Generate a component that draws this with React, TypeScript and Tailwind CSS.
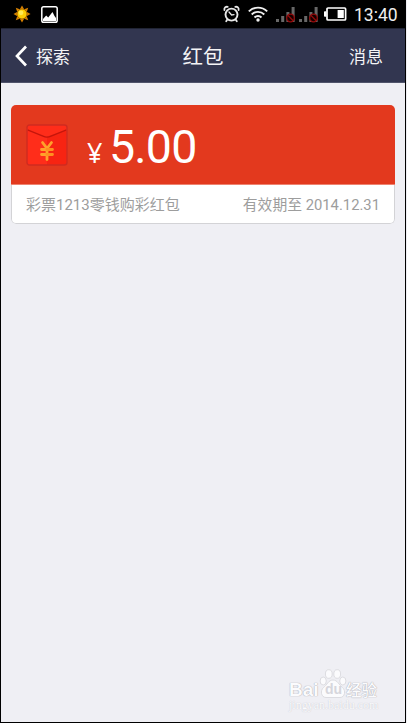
import type { ReactNode } from 'react';

function SunIcon() {
  return (
    <svg width="18" height="18" viewBox="0 0 18 18">
      <g fill="#d98200">
        <path d="M9 0.5L11 4H7z" />
        <path d="M9 17.5L11 14H7z" />
        <path d="M0.5 9L4 7v4z" />
        <path d="M17.5 9L14 7v4z" />
        <path d="M2.8 2.8L6.8 4.2 4.2 6.8z" />
        <path d="M15.2 2.8L11.2 4.2 13.8 6.8z" />
        <path d="M2.8 15.2L6.8 13.8 4.2 11.2z" />
        <path d="M15.2 15.2L11.2 13.8 13.8 11.2z" />
      </g>
      <circle cx="9" cy="9" r="5" fill="#ffcf05" stroke="#a86200" strokeWidth="0.8" />
      <circle cx="8" cy="7.8" r="2.4" fill="#ffea55" />
    </svg>
  );
}

function PictureIcon() {
  return (
    <svg width="17" height="17" viewBox="0 0 17 17">
      <rect x="0.8" y="0.8" width="15.4" height="15.4" rx="1.8" fill="none" stroke="#fff" strokeWidth="1.5" />
      <path d="M2 15v-2l3.2-3.4 2 2L11.5 6l2 4 1.5 2v3z" fill="#fff" />
    </svg>
  );
}

function AlarmIcon() {
  return (
    <svg width="17" height="18" viewBox="0 0 17 18" fill="none" stroke="#e8e8e8" strokeLinecap="round">
      <circle cx="8.5" cy="9.6" r="6" strokeWidth="1.9" />
      <path d="M1.4 5C1 2.8 2.6 1.4 4.7 1.8M15.6 5c.4-2.2-1.2-3.6-3.3-3.2M4.2 14.8l-1 1.5M12.8 14.8l1 1.5" strokeWidth="1.8" />
      <path d="M6 7l2.6 3 2.4-.4" strokeWidth="1.3" />
    </svg>
  );
}

function WifiIcon() {
  return (
    <svg width="20" height="16" viewBox="0 0 20 16" fill="none" stroke="#f0f0f0" strokeWidth="1.9">
      <path d="M0.8 5.4c5.2-5 13.2-5 18.4 0" />
      <path d="M3.7 8.5c3.6-3.5 9-3.5 12.6 0" />
      <path d="M6.5 11.5c2-2 5-2 7 0" />
      <circle cx="10" cy="14" r="1.7" fill="#f0f0f0" stroke="none" />
    </svg>
  );
}

function SignalIcon() {
  return (
    <svg width="20" height="16" viewBox="0 0 20 16">
      <g fill="#686868">
        <rect x="0" y="12" width="3" height="3" />
        <rect x="5.2" y="9" width="3" height="6" />
        <rect x="10.4" y="5" width="3" height="10" />
        <rect x="15.6" y="0" width="3" height="15" />
      </g>
      <circle cx="14.5" cy="11" r="3.8" fill="#180000" stroke="#920b0b" strokeWidth="1.3" />
      <path d="M11.8 8.3l5.4 5.4" stroke="#920b0b" strokeWidth="1.3" />
    </svg>
  );
}

function BatteryIcon() {
  return (
    <svg width="23" height="14" viewBox="0 0 23 14">
      <rect x="0" y="4.2" width="2.5" height="5.6" rx="0.8" fill="#fff" />
      <rect x="3" y="1" width="18.6" height="12" rx="1" fill="none" stroke="#fff" strokeWidth="1.7" />
      <rect x="13.6" y="3" width="6.2" height="8" fill="#fff" />
    </svg>
  );
}

function EnvelopeIcon() {
  return (
    <svg width="42" height="42" viewBox="0 0 42 42">
      <rect x="1" y="1" width="40" height="40" rx="2.5" fill="#ff2d1a" />
      <path d="M21 12.5L41 6v32.5a2.5 2.5 0 0 1-2.5 2.5H21z" fill="#f72412" />
      <path d="M1.5 5.8L17 12.2q4 1.8 8 0L40.5 5.8" fill="none" stroke="#c4160c" strokeWidth="1.3" />
      <rect x="1" y="1" width="40" height="40" rx="2.5" fill="none" stroke="#cf2b20" strokeWidth="1.4" />
      <g fill="none" stroke="#ffa12b" strokeWidth="2.8" strokeLinecap="round">
        <path d="M16.5 18.5L21 24.5l4.5-6" />
        <path d="M15.5 25.5H21M15.5 30.5H21" />
        <path d="M21 24v11.5" />
      </g>
      <path d="M21 25.5h5.5M21 30.5h5.5" stroke="#ff8f20" strokeWidth="2.8" strokeLinecap="round" />
    </svg>
  );
}

function PawIcon() {
  return (
    <svg className="absolute left-0 top-0" width="28" height="30" viewBox="0 0 28 30" fill="#fbfbfd" stroke="#d9d9de" strokeWidth="0.9">
      <ellipse cx="4.2" cy="12" rx="3.1" ry="4" />
      <ellipse cx="9.8" cy="5" rx="3.4" ry="4.3" />
      <ellipse cx="18.2" cy="5" rx="3.4" ry="4.3" />
      <ellipse cx="23.8" cy="12" rx="3.1" ry="4" />
      <path d="M14 11c4.5 0 6 5 9.5 7.5c3.5 3 2.5 10-2.5 10h-14c-5 0-6-7-2.5-10c3.5-2.5 5-7.5 9.5-7.5z" />
    </svg>
  );
}

function StatusBar() {
  return (
    <div className="flex h-7 items-center bg-black pl-3 pr-2">
      <SunIcon />
      <div className="ml-[10px] flex flex-1">
        <PictureIcon />
      </div>
      <AlarmIcon />
      <div className="ml-[8px]">
        <WifiIcon />
      </div>
      <div className="ml-[8px] flex gap-[3px] pt-[2px]">
        <SignalIcon />
        <SignalIcon />
      </div>
      <div className="ml-[5px]">
        <BatteryIcon />
      </div>
      <span className="ml-[7px] w-[43px] whitespace-nowrap pt-[3px] font-[Roboto,sans-serif] text-[17.5px] leading-none text-[#eeeeee]">
        13:40
      </span>
    </div>
  );
}

function NavBar() {
  return (
    <div className="grid h-[55px] grid-cols-3 items-center border-b border-b-[#50546b] border-t border-t-[#202434] bg-[#323650] text-[#f4f4f6]">
      <div className="flex items-center pl-[13px] pt-px">
        <svg width="14" height="22" viewBox="0 0 14 22">
          <path d="M12 1.5L3 11l9 9.5" fill="none" stroke="#fff" strokeWidth="2.7" />
        </svg>
        <span className="ml-[8px] pt-px text-[17px] leading-6">探索</span>
      </div>
      <h1 className="pt-[2px] text-center text-[20.5px] leading-6">红包</h1>
      <span className="pr-[22px] pt-[2px] text-right text-[17px] leading-6">消息</span>
    </div>
  );
}

function Coupon({ amount, name, expiry, icon }: { amount: string; name: string; expiry: string; icon: ReactNode }) {
  return (
    <div className="mx-[10px] mt-[22px] overflow-hidden rounded-[5px]">
      <div className="flex h-[80px] items-center border-b border-[#ee8370] bg-[#e3391e] pl-[15px] text-white">
        {icon}
        <div className="ml-[17px] flex items-baseline pt-[5px]">
          <span className="w-6 pl-[2px] font-['Open_Sans',sans-serif] text-[27px] leading-none">¥</span>
          <span className="font-[Roboto,sans-serif] text-[46.5px] leading-none tracking-[-0.8px]">{amount}</span>
        </div>
      </div>
      <div className="flex h-[39px] items-center justify-between whitespace-nowrap rounded-b-[5px] border border-t-0 border-[#d3d3d6] bg-white px-[14px] pt-[3px] text-[15px] text-[#9d9d9d]">
        <span>{name}</span>
        <span className="text-[14.8px]">{expiry}</span>
      </div>
    </div>
  );
}

function Watermark() {
  return (
    <div className="absolute bottom-[9px] left-[288px] h-[44px] w-[91px] font-['Liberation_Sans',sans-serif] text-[#fbfbfd] [text-shadow:0_0_1px_#a8a8b0,0_0_1px_#b4b4bc]">
      <span className="absolute left-0 top-[13px] text-[19px] font-bold leading-[16px]">Bai</span>
      <div className="absolute left-[30px] top-0 h-[30px] w-[28px]">
        <PawIcon />
        <span className="absolute left-[6px] top-[13px] text-[14px] font-bold leading-none text-[#d6d6dc] [text-shadow:none]">du</span>
      </div>
      <span className="absolute left-[57px] top-[13px] whitespace-nowrap font-['Noto_Sans_CJK_SC',sans-serif] text-[15.5px] font-medium leading-none">
        经验
      </span>
      <span className="absolute left-0 top-[31px] whitespace-nowrap font-['Liberation_Serif',serif] text-[12px] leading-[10px] [text-shadow:0_0_1px_#b8b8c0]">
        jingyan.baidu.com
      </span>
    </div>
  );
}

export default function App() {
  return (
    <div className="h-[723px] w-[407px] bg-[#eeeef3] font-[Roboto,'Noto_Sans_CJK_SC',sans-serif]">
      <div className="relative h-full w-[406px] overflow-hidden border-x border-b border-black bg-[#efeff4]">
        <StatusBar />
        <NavBar />
        <Coupon amount="5.00" name="彩票1213零钱购彩红包" expiry="有效期至 2014.12.31" icon={<EnvelopeIcon />} />
        <Watermark />
      </div>
    </div>
  );
}
